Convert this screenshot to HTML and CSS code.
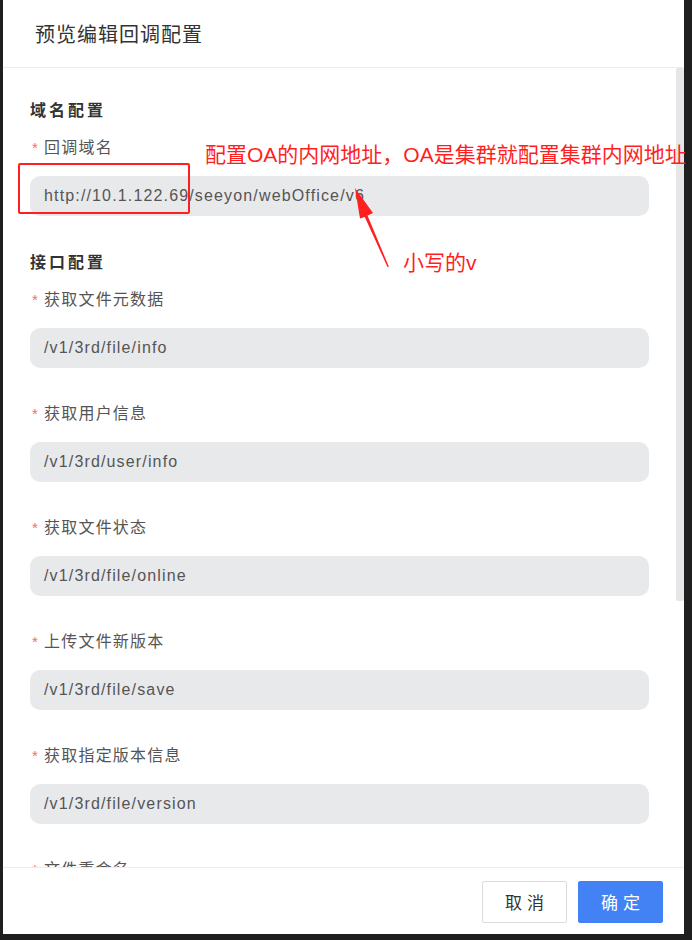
FILE: index.html
```html
<!DOCTYPE html>
<html lang="zh-CN">
<head>
    <meta charset="UTF-8">
    <meta name="viewport" content="width=device-width, initial-scale=1.0">
    <title>预览编辑回调配置</title>
    <link rel="stylesheet" href="styles.css">
</head>
<body>
    <div class="dialog">
        <div class="dialog-header">预览编辑回调配置</div>

        <div class="dialog-main">
            <div class="dialog-body">
                <h3 class="section-title">域名配置</h3>
                <div class="form-item">
                    <label class="form-label">回调域名</label>
                    <div class="form-input">http://10.1.122.69/seeyon/webOffice/v6</div>
                </div>

                <h3 class="section-title">接口配置</h3>
                <div class="form-item">
                    <label class="form-label">获取文件元数据</label>
                    <div class="form-input">/v1/3rd/file/info</div>
                </div>
                <div class="form-item">
                    <label class="form-label">获取用户信息</label>
                    <div class="form-input">/v1/3rd/user/info</div>
                </div>
                <div class="form-item">
                    <label class="form-label">获取文件状态</label>
                    <div class="form-input">/v1/3rd/file/online</div>
                </div>
                <div class="form-item">
                    <label class="form-label">上传文件新版本</label>
                    <div class="form-input">/v1/3rd/file/save</div>
                </div>
                <div class="form-item">
                    <label class="form-label">获取指定版本信息</label>
                    <div class="form-input">/v1/3rd/file/version</div>
                </div>
                <div class="form-item">
                    <label class="form-label">文件重命名</label>
                    <div class="form-input">/v1/3rd/file/rename</div>
                </div>
            </div>
            <div class="scrollbar">
                <div class="scrollbar-thumb"></div>
            </div>
        </div>

        <div class="dialog-footer">
            <button class="btn">取消</button>
            <button class="btn btn-primary">确定</button>
        </div>

        <!-- 截图上的标注 -->
        <div class="mark-box"></div>
        <div class="mark-text mark-text-top">配置OA的内网地址，OA是集群就配置集群内网地址</div>
        <div class="mark-text mark-text-v">小写的v</div>
        <svg class="mark-arrow" width="60" height="100" viewBox="340 180 60 100">
            <polygon points="355,188 373,213 367.5,215.5 388.8,266.5 387.6,267.2 364.8,217 360,218.5" fill="#ff1f1f"/>
        </svg>
    </div>
</body>
</html>
```

FILE: styles.css
```css
body {
    margin: 0;
    background-color: #1f1f1f;
    font-family: "Liberation Sans", "Noto Sans CJK SC", sans-serif;
}

.dialog {
    position: relative;
    width: 681px;
    height: 934px;
    margin-left: 3px;
    background-color: #ffffff;
    display: flex;
    flex-direction: column;
}

.dialog-header {
    height: 67px;
    padding-left: 32px;
    border-bottom: 1px solid #ececec;
    display: flex;
    align-items: center;
    font-size: 20px;
    letter-spacing: 1px;
    color: #333333;
}

.dialog-main {
    flex: 1;
    display: flex;
    overflow: hidden;
}

.dialog-body {
    flex: 1;
    padding: 31px 27px 0 27px;
    overflow: hidden;
}

.scrollbar {
    width: 8px;
}

.scrollbar-thumb {
    height: 533px;
    background-color: #e6e6e8;
    border-radius: 2px;
}

.section-title {
    margin: 0 0 14px 0;
    font-size: 16px;
    line-height: 24px;
    letter-spacing: 3px;
    font-weight: bold;
    color: #333333;
}

.form-item {
    margin-bottom: 35px;
}

.form-item + .section-title {
    margin-top: 1px;
}

.form-label {
    display: block;
    font-size: 16px;
    line-height: 22px;
    letter-spacing: 1.2px;
    color: #555555;
    margin-bottom: 17px;
}

.form-label::before {
    content: "*";
    color: #f56c6c;
    margin-right: 5px;
    font-size: 15px;
    margin-left: 2px;
}

.form-input {
    height: 40px;
    padding: 0 14px;
    border-radius: 10px;
    background-color: #e8e9eb;
    display: flex;
    align-items: center;
    font-size: 16px;
    letter-spacing: 1.15px;
    color: #555555;
}

.dialog-footer {
    height: 67px;
    border-top: 1px solid #ececec;
    display: flex;
    justify-content: flex-end;
    align-items: flex-start;
    gap: 11px;
    padding: 13px 21px 0 0;
    box-sizing: border-box;
    position: relative;
    background-color: #ffffff;
}

.btn {
    width: 85px;
    height: 42px;
    font-family: "Noto Sans CJK SC", sans-serif;
    font-size: 17px;
    line-height: 24px;
    letter-spacing: 5px;
    padding: 0 0 0 5px;
    color: #333333;
    background-color: #ffffff;
    border: 1px solid #dcdcdc;
    border-radius: 2px;
    cursor: pointer;
}

.btn-primary {
    color: #ffffff;
    background-color: #4282f4;
    border-color: #4282f4;
}

.mark-box {
    position: absolute;
    left: 15px;
    top: 163px;
    width: 168px;
    height: 47px;
    border: 2px solid #ff1f1f;
    border-radius: 2px;
}

.mark-text {
    position: absolute;
    color: #ff1f1f;
    white-space: nowrap;
    font-family: "Liberation Sans", "Noto Sans CJK SC", sans-serif;
}

.mark-text-top {
    left: 202px;
    top: 141px;
    font-size: 21px;
    line-height: 28px;
}

.mark-text-v {
    left: 400px;
    top: 249px;
    font-size: 21px;
    line-height: 28px;
}

.mark-arrow {
    position: absolute;
    left: 337px;
    top: 180px;
}
```
